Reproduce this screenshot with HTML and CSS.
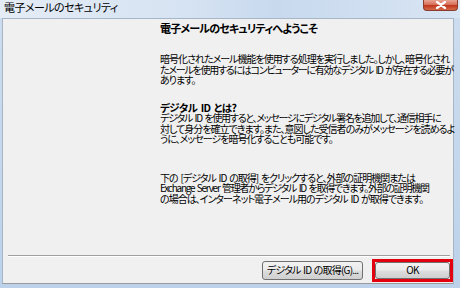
FILE: index.html
```html
<!DOCTYPE html>
<html lang="ja">
<head>
<meta charset="utf-8">
<link rel="stylesheet" href="styles.css">
</head>
<body>
<div class="window">
  <div class="titlebar">
    <span class="title">電子メールのセキュリティ</span>
    <div class="close"><svg width="12" height="8" viewBox="0 0 12 8"><path d="M2 1 L10 7 M10 1 L2 7" stroke="#fff" stroke-width="2.2" stroke-linecap="round"/></svg></div>
  </div>
  <div class="client">
    <div class="content">
      <div class="main">
        <h1 class="heading">電子メールのセキュリティへようこそ</h1>
        <div class="para p1">
          <span class="ln">暗号化されたメール機能を使用する処理を実行しました。しかし、暗号化され</span>
          <span class="ln tight">たメールを使用するにはコンピューターに有効なデジタル ID が存在する必要が</span>
          <span class="ln">あります。</span>
        </div>
        <h2 class="subhead">デジタル ID とは?</h2>
        <div class="para p2">
          <span class="ln tight">デジタル ID を使用すると、メッセージにデジタル署名を追加して、通信相手に</span>
          <span class="ln">対して身分を確立できます。また、意図した受信者のみがメッセージを読めるよ</span>
          <span class="ln">うに、メッセージを暗号化することも可能です。</span>
        </div>
        <div class="para p3">
          <span class="ln">下の [デジタル ID の取得] をクリックすると、外部の証明機関または</span>
          <span class="ln tight">Exchange Server 管理者からデジタル ID を取得できます。外部の証明機関</span>
          <span class="ln">の場合は、インターネット電子メール用のデジタル ID が取得できます。</span>
        </div>
      </div>
    </div>
    <div class="sep"></div>
    <div class="buttons">
      <button class="btn btn-get">デジタル ID の取得(G)...</button>
      <div class="highlight"><button class="btn btn-ok">OK</button></div>
    </div>
  </div>
</div>
</body>
</html>
```
FILE: styles.css
```css
html, body {
  margin: 0;
  padding: 0;
}
body {
  width: 460px;
  height: 288px;
  overflow: hidden;
  font-family: "Noto Sans CJK JP", "Noto Sans", sans-serif;
  font-feature-settings: "palt";
  color: #000;
}
.window {
  width: 460px;
  height: 288px;
  background: linear-gradient(180deg, #dfe9f5 0px, #cddcee 18px, #bcd2ea 100%);
  display: flex;
  flex-direction: column;
}
.titlebar {
  height: 18px;
  display: flex;
  justify-content: space-between;
  align-items: flex-start;
  padding-left: 4px;
  padding-right: 2px;
  background: linear-gradient(90deg, #e4ecf6 0%, #d6e3f2 40%, #c8d9ee 60%, #d8e5f3 100%);
}
.title {
  font-size: 11px;
  line-height: 15px;
  letter-spacing: -0.55px;
  color: #000;
}
.close {
  width: 35px;
  height: 11px;
  border: 1px solid #8b3b2c;
  border-top: none;
  border-radius: 0 0 4px 4px;
  background: linear-gradient(180deg, #e8a493 0%, #d9705a 45%, #c0391f 55%, #d36a4a 100%);
  display: flex;
  align-items: center;
  justify-content: center;
  box-sizing: border-box;
}
.client {
  margin-left: 2px;
  width: 452px;
  height: 266px;
  box-sizing: border-box;
  border: 1px solid #a5b6c9;
  border-bottom-color: #9a9a9a;
  background: #f0f0f0;
  display: flex;
  flex-direction: column;
}
.content {
  flex: 1;
  display: flex;
}
.main {
  margin-left: 157px;
  padding-top: 4px;
}
.heading {
  margin: 0;
  height: 11px;
  font-size: 11px;
  font-weight: bold;
  line-height: 11px;
  letter-spacing: -0.8px;
  white-space: nowrap;
}
.para {
  margin: 0;
  font-size: 10px;
  white-space: nowrap;
  letter-spacing: -1px;
  word-spacing: 1.5px;
}
.ln {
  display: block;
  height: 10.5px;
  line-height: 10.5px;
}
.ln.tight {
  letter-spacing: -1.25px;
}
.p1 {
  margin-top: 20px;
}
.subhead {
  margin: 17px 0 0 0;
  height: 10.5px;
  font-size: 10.5px;
  line-height: 10.5px;
  font-weight: bold;
  letter-spacing: -0.6px;
  word-spacing: 1.5px;
  white-space: nowrap;
}
.p3 {
  margin-top: 28px;
}
.sep {
  margin-left: 5px;
  width: 442px;
  height: 0;
  border-top: 1px solid #a0a0a0;
  border-bottom: 1px solid #ffffff;
}
.buttons {
  height: 26px;
  display: flex;
  justify-content: flex-end;
  align-items: center;
  gap: 9px;
}
.btn {
  font-family: "Noto Sans CJK JP", "Noto Sans", sans-serif;
  font-feature-settings: "palt";
  font-size: 10px;
  line-height: 14px;
  letter-spacing: -0.8px;
  word-spacing: 1px;
  color: #000;
  border: 1px solid #707070;
  border-radius: 3px;
  background: linear-gradient(180deg, #f2f2f2 0%, #ebebeb 48%, #dddddd 52%, #cfcfcf 100%);
  padding: 0;
  height: 19px;
  box-sizing: border-box;
  white-space: nowrap;
}
.btn-get {
  width: 101px;
}
.highlight {
  border: 3px solid #e3000f;
  width: 81px;
  height: 23px;
  box-sizing: border-box;
  display: flex;
}
.btn-ok {
  width: 75px;
  height: 17px;
}
```
